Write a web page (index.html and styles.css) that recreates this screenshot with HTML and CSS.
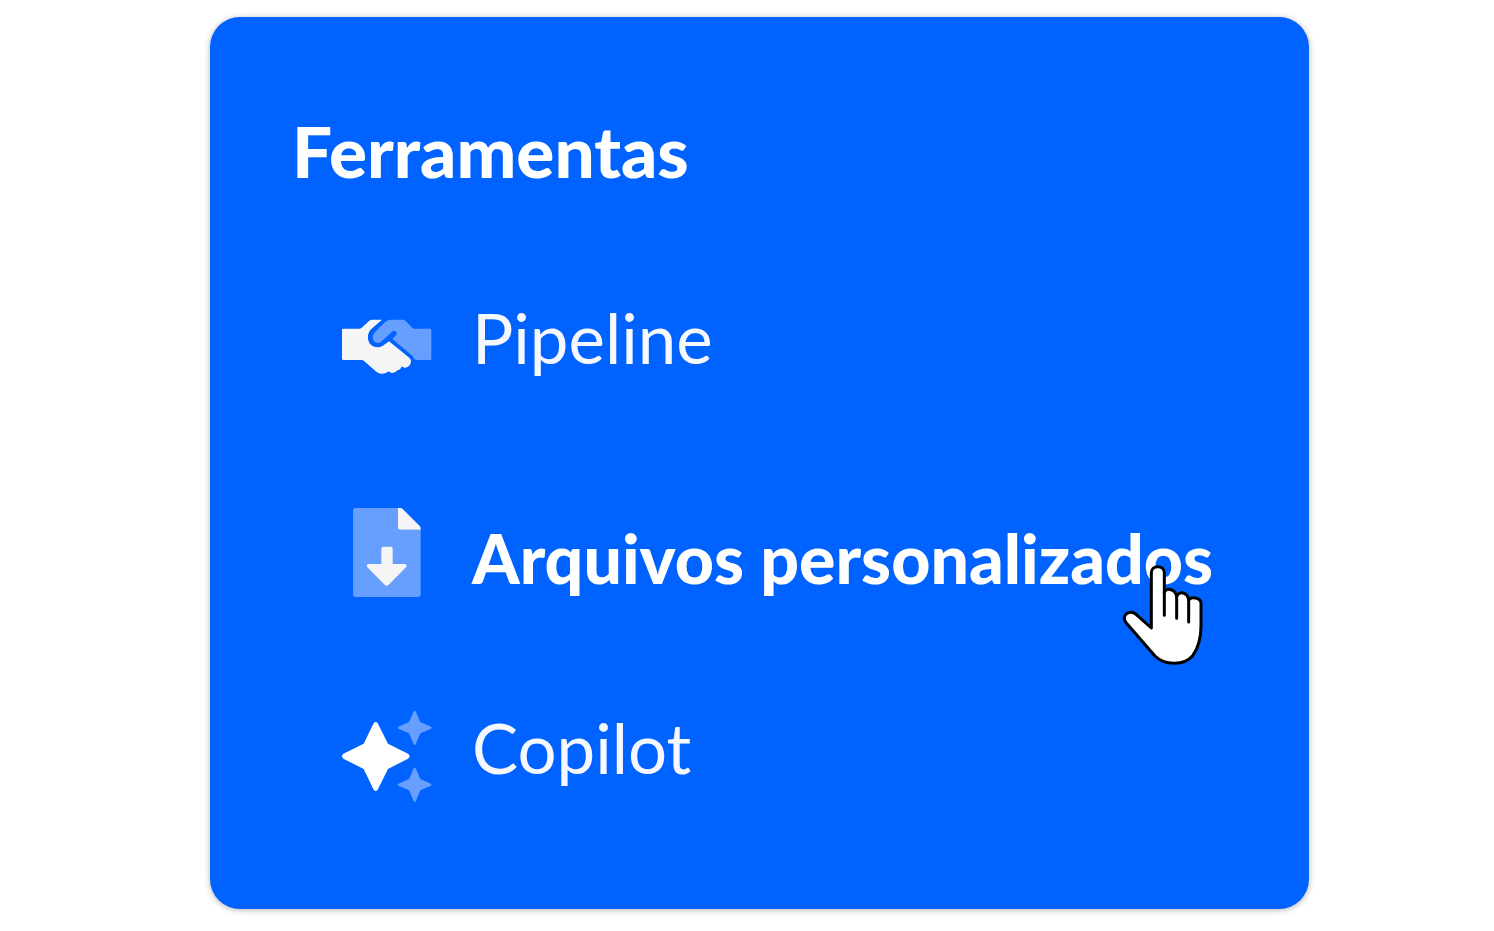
FILE: index.html
```html
<!DOCTYPE html>
<html lang="pt-BR">
<head>
  <meta charset="UTF-8" />
  <title>Ferramentas</title>
  <link rel="stylesheet" href="styles.css">
</head>
<body>
  <nav class="menu">
    <h2>Ferramentas</h2>
    <ul class="menu-list">
      <li>
        <a class="menu-item" href="#pipeline">
          <svg class="icon" viewBox="36 6 270 270" aria-hidden="true">
            <path class="soft" d="M182 59H220Q223 59 226 62L250 86H300Q304 86 304 90V176Q304 180 300 180H259Q255 180 253 176Q250 170 244 165L187 117L199 105Q202 99 197 94Q191 90 186 95L160 119Q154 128 145 129C130 130 122 111 133 98L163 68Q172 59 182 59Z"/>
            <path class="solid" d="M40 86H88Q92 86 95 83L117 63Q122 59 128 59H156L123 88C106 106 113 142 143 142C155 142 164 134 177 124L236 172Q246 180 242 190Q238 202 225 203Q219 203 215 199Q212 210 202 211Q197 220 185 219Q179 217 176 214Q169 222 153 221Q145 219 139 215L103 184Q99 180 94 180H40Q36 180 36 176V90Q36 86 40 86Z"/>
          </svg>
          <span class="label">Pipeline</span>
        </a>
      </li>
      <li>
        <a class="menu-item active" href="#arquivos">
          <svg class="icon" viewBox="36 36 270 270" aria-hidden="true">
            <path class="soft" d="M77 39H205V104H272V298Q272 306 264 306H77Q69 306 69 298V47Q69 39 77 39Z"/>
            <path class="solid" d="M204 39H211Q215 39 218 42L269 93Q272 96 272 100V104H209Q204 104 204 99Z"/>
            <path class="solid" d="M160 155H182Q188 155 188 161V207H224Q233 208 228 217L176 269Q170 275 164 269L112 217Q107 208 116 207H154V161Q154 155 160 155Z"/>
          </svg>
          <span class="label">Arquivos personalizados
            <svg class="cursor" viewBox="66 132 246 306" aria-hidden="true">
              <path d="M154 324V158C154 134 193 134 193 158V218C195 202 226 204 230 230C235 212 263 215 266 240C272 228 303 232 303 250V318C303 350 298 379 278 407C252 438 193 436 165 408L79 309C60 286 90 266 109 284Z"/>
              <path d="M193 216V286M230 228V295M266 238V306"/>
            </svg>
          </span>
        </a>
      </li>
      <li>
        <a class="menu-item" href="#copilot">
          <svg class="icon" viewBox="36 36 270 270" aria-hidden="true">
            <path class="bright" d="M131 70Q137 62 143 70L174 131L234 161Q244 168 234 176L174 207L143 269Q137 277 131 269L101 207L40 176Q32 168 40 161L101 131Z"/>
            <path class="soft" d="M251 34Q254 30 257 34L271 66L303 80Q307 83 303 86L271 100L257 133Q254 137 251 133L237 100L205 86Q201 83 205 80L237 66Z"/>
            <path class="soft" d="M251 205Q254 201 257 205L271 237L303 251Q307 254 303 257L271 271L257 304Q254 308 251 304L237 271L205 257Q201 254 205 251L237 237Z"/>
          </svg>
          <span class="label">Copilot</span>
        </a>
      </li>
    </ul>
  </nav>
</body>
</html>
```
FILE: styles.css
```css
* {
  box-sizing: border-box;
}
body {
  display: flex;
  min-height: 100vh;
  margin: 0;
  padding: 17px 185px 22px 210px;
  background: #fff;
  font-family: Lato, "Open Sans", sans-serif;
}
.menu {
  flex: 1;
  padding: 92px 82px;
  border-radius: 30px;
  background: #0062ff;
  box-shadow: 0 1px 6px rgba(0, 0, 0, 0.3);
  color: #fff;
}
h2 {
  margin: 0;
  font-size: 71px;
  font-weight: 900;
  line-height: 84px;
}
.menu-list {
  display: flex;
  flex-direction: column;
  gap: 115px;
  margin: 109px 0 0;
  padding: 0 0 0 50px;
  list-style: none;
}
.menu-item {
  display: flex;
  align-items: center;
  gap: 40px;
  height: 90px;
  color: #f5f8ff;
  text-decoration: none;
}
.label {
  position: relative;
  padding-bottom: 18px;
  font-size: 69px;
  line-height: 80px;
  white-space: nowrap;
}
.active .label {
  padding: 12px 0 0;
  color: #fff;
  font-size: 68px;
  font-weight: 900;
}
.icon {
  flex: none;
  width: 90px;
  height: 90px;
  overflow: visible;
}
.soft {
  fill: #669fff;
}
.solid {
  fill: #f5f5f5;
}
.bright {
  fill: #fff;
}
.cursor {
  position: absolute;
  top: 58px;
  left: 650px;
  width: 82px;
  height: 102px;
  fill: #fff;
  stroke: #000;
  stroke-width: 9;
  stroke-linecap: round;
  stroke-linejoin: round;
}
```
